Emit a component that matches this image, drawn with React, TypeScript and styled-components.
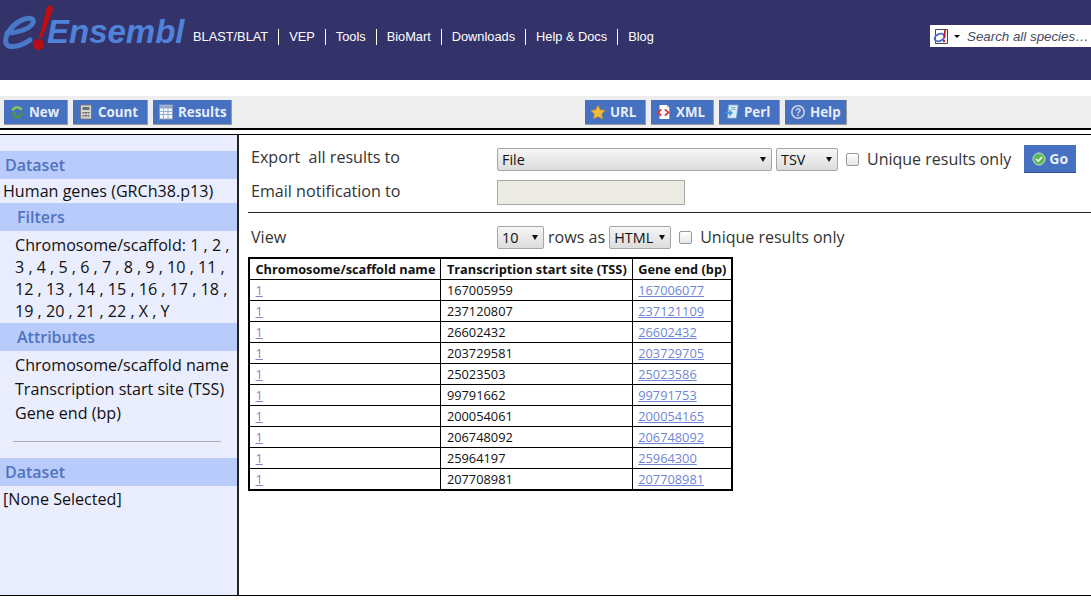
import React from "react";
import styled, { createGlobalStyle } from "styled-components";

const GlobalStyle = createGlobalStyle`
  html, body {
    margin: 0;
    padding: 0;
    background: #fff;
    font-family: "Open Sans", sans-serif;
    color: #111;
  }
`;

const Page = styled.div`
  width: 1091px;
  height: 600px;
  overflow: hidden;
  display: flex;
  flex-direction: column;
`;

const Masthead = styled.header`
  height: 80px;
  background: #33336a;
  display: flex;
  align-items: flex-start;
  flex: none;
`;

const Logo = styled.div`
  width: 193px;
  height: 60px;
  flex: none;
  display: flex;
  align-items: flex-start;
  font-family: "Liberation Sans", sans-serif;
  font-style: italic;
`;

const LogoMark = styled.svg`
  flex: none;
  width: 47px;
  height: 56px;
  overflow: visible;
`;

const LogoWord = styled.span`
  font-size: 33px;
  line-height: 40px;
  font-weight: 700;
  color: #4f82d8;
  margin-top: 12px;
`;

const Nav = styled.nav`
  display: flex;
  align-items: center;
  margin-top: 29px;
  font-family: "Liberation Sans", sans-serif;
  font-size: 12.8px;
  color: #fff;
`;

const NavItem = styled.span`
  line-height: 16px;
  padding: 0 10px;
  border-left: 1px solid #fff;
  &:first-child {
    padding-left: 0;
    border-left: 0;
  }
`;

const SpeciesSearch = styled.div`
  margin: 25px 0 0 auto;
  width: 161px;
  height: 22px;
  background: #fff;
  display: flex;
  align-items: center;
  padding-left: 3px;
  box-sizing: border-box;
  font-family: "Liberation Sans", sans-serif;
  font-style: italic;
  font-size: 13.33px;
  color: #444a66;
  white-space: nowrap;
  overflow: hidden;
`;

const Caret = styled.span`
  width: 0;
  height: 0;
  margin: 0 7px 0 4px;
  border-left: 3px solid transparent;
  border-right: 3px solid transparent;
  border-top: 3px solid #000;
`;

const Toolbar = styled.div`
  margin-top: 16px;
  height: 32px;
  flex: none;
  background: #eee;
  display: flex;
  align-items: flex-start;
  padding: 4px 0 0 4px;
  box-sizing: border-box;
`;

const ToolGroup = styled.div`
  display: flex;
  gap: 5px;
`;

const ToolGroupRight = styled(ToolGroup)`
  margin-left: 353px;
`;

const ToolButton = styled.div<{ $w: number }>`
  width: ${(p) => p.$w}px;
  height: 25px;
  box-sizing: border-box;
  background: #4670c0;
  border-right: 1px solid #9a9a9a;
  border-bottom: 1px solid #9a9a9a;
  display: flex;
  align-items: center;
  gap: 4px;
  padding: 0 0 1px 5px;
  color: #e6edf9;
  font-size: 13.33px;
  font-weight: 700;
  white-space: nowrap;
  svg {
    flex: none;
  }
`;

const DoubleRule = styled.div`
  height: 7px;
  flex: none;
  box-sizing: border-box;
  border-top: 2px solid #000;
  border-bottom: 1px solid #000;
`;

const Main = styled.div`
  flex: none;
  height: 461px;
  display: flex;
  border-bottom: 1px solid #000;
  box-sizing: border-box;
`;

const Sidebar = styled.aside`
  width: 239px;
  flex: none;
  box-sizing: border-box;
  border-right: 2px solid #222;
  background: #e9edfd;
  padding-top: 16px;
  font-size: 16.1px;
`;

const SideHead = styled.div<{ $indent?: boolean }>`
  height: 28px;
  line-height: 28px;
  background: #b9cbfb;
  color: #4f73c0;
  font-weight: 600;
  font-size: 16px;
  padding-left: ${(p) => (p.$indent ? 17 : 5)}px;
`;

const SideText = styled.div<{ $indent?: boolean }>`
  line-height: 24px;
  padding-left: ${(p) => (p.$indent ? 15 : 3)}px;
  white-space: nowrap;
`;

const FilterList = styled.div`
  padding: 3px 0 1px 15px;
  line-height: 22px;
  white-space: nowrap;
`;

const AttributeList = styled.div`
  padding-top: 2px;
`;

const NoneSelected = styled(SideText)`
  padding-top: 1px;
`;

const SideDivider = styled.hr`
  margin: 16px 16px 16px 13px;
  border: 0;
  border-top: 1px solid #aab;
  height: 0;
`;

const Content = styled.main`
  flex: 1;
  min-width: 0;
  display: flex;
  flex-direction: column;
  padding: 11px 0 0 9px;
  color: #333;
`;

const FormRow = styled.div`
  display: flex;
  align-items: center;
  height: 26px;
  font-size: 16.1px;
`;

const EmailRow = styled(FormRow)`
  margin-top: 7px;
`;

const FormLabel = styled.div<{ $lift?: number }>`
  width: 249px;
  padding: 0 0 ${(p) => p.$lift ?? 0}px 3px;
  box-sizing: border-box;
  flex: none;
`;

const Select = styled.div<{ $w: number }>`
  width: ${(p) => p.$w}px;
  height: 23px;
  box-sizing: border-box;
  flex: none;
  border: 1px solid #a6a6a6;
  border-radius: 2px;
  background: linear-gradient(#f6f6f6, #dcdcdc);
  color: #111;
  font-size: 14.4px;
  line-height: 22px;
  padding-left: 4px;
  position: relative;
  &::after {
    content: "";
    position: absolute;
    right: 5px;
    top: 8px;
    border-left: 3.5px solid transparent;
    border-right: 3.5px solid transparent;
    border-top: 5px solid #111;
  }
`;

const FormatSelect = styled(Select)`
  margin-left: 4px;
`;

const Check = styled.span`
  width: 11px;
  height: 11px;
  flex: none;
  margin-left: 8px;
  border: 1px solid #999;
  border-radius: 2px;
  background: linear-gradient(#fff, #e6e6e6);
`;

const UniqueLabel = styled.span`
  font-size: 16px;
  margin-left: 8px;
  white-space: nowrap;
`;

const GoButton = styled.div`
  margin-left: 13px;
  width: 52px;
  height: 28px;
  box-sizing: border-box;
  background: #4670c0;
  border-bottom: 1px solid #2f4f90;
  color: #e6edf9;
  font-size: 14px;
  font-weight: 700;
  display: flex;
  align-items: center;
  justify-content: center;
  gap: 3px;
`;

const DisabledInput = styled.div`
  width: 188px;
  height: 25px;
  box-sizing: border-box;
  border: 1px solid #a9a9a9;
  background: #ebebe4;
`;

const FormRule = styled.hr`
  margin: 7px 0 0 0;
  border: 0;
  border-top: 1px solid #222;
  height: 0;
`;

const ViewRow = styled(FormRow)`
  margin-top: 11px;
`;

const RowsAs = styled.span`
  margin: 0 4px;
`;

const Table = styled.table`
  margin: 7px 0 0 0;
  border-collapse: collapse;
  border: 2px solid #000;
  font-size: 12.8px;
  color: #111;
  th, td {
    border: 1px solid #000;
    padding: 0 5px 0 5.5px;
    height: 20px;
    text-align: left;
    white-space: nowrap;
    line-height: 20px;
  }
  th {
    font-size: 12.75px;
    font-weight: 700;
  }
`;

const VisitedLink = styled.a`
  color: #9a78c4;
  text-decoration: underline;
`;

const CellLink = styled.a`
  color: #6f86d6;
  text-decoration: underline;
`;

function EnsemblMark() {
  return (
    <LogoMark viewBox="0 0 47 56">
      <path
        d="M7 33C17 33 30 29 33 23C35 17 27 17 20 21C11 26 4 36 6 43C8 49 20 47 30 40"
        fill="none"
        stroke="#4a78c8"
        strokeWidth="5"
        strokeLinecap="round"
      />
      <path d="M47 7C50 4 54 6 52.5 11L42 38H39Z" fill="#c00d12" />
      <circle cx="38.5" cy="44.5" r="5.5" fill="#b80d12" />
    </LogoMark>
  );
}

function ReloadIcon() {
  return (
    <svg width="16" height="16" viewBox="0 0 16 16">
      <path d="M3.5 6.5A5 5 0 0 1 12.5 6" fill="none" stroke="#8cc850" strokeWidth="2.4" />
      <path d="M12.8 9A5 5 0 0 1 5 12.2" fill="none" stroke="#4f9a33" strokeWidth="2.4" />
      <path d="M1 9.5h6l-3-4z" fill="#4f9a33" transform="translate(1 3) scale(1 .8)" />
    </svg>
  );
}

function CalcIcon() {
  return (
    <svg width="16" height="16" viewBox="0 0 16 16">
      <rect x="2.5" y="1" width="11" height="14" rx="1" fill="#d8d8d2" stroke="#777" />
      <rect x="4.5" y="3" width="7" height="3" fill="#66707c" />
      <path d="M4.5 8h2v1.5h-2zM7 8h2v1.5H7zM9.5 8h2v1.5h-2zM4.5 11h2v1.5h-2zM7 11h2v1.5H7zM9.5 11h2v1.5h-2z" fill="#666" />
    </svg>
  );
}

function TableIcon() {
  return (
    <svg width="16" height="16" viewBox="0 0 16 16">
      <rect x="1.5" y="1" width="13" height="14" fill="#f4f7fc" stroke="#8b9bb5" />
      <rect x="2" y="1.5" width="12" height="3" fill="#8fa8cc" />
      <path d="M1.5 7.5h13M1.5 10.5h13M5.5 4.5v10M10 4.5v10" stroke="#8fb0d8" fill="none" />
    </svg>
  );
}

function StarIcon() {
  return (
    <svg width="16" height="16" viewBox="0 0 18 17">
      <path d="M9 .8l2.5 5.2 5.7.8-4.1 4 1 5.6L9 13.7l-5.1 2.7 1-5.6-4.1-4 5.7-.8z" fill="#f0bb3c" stroke="#c28d24" strokeWidth=".6" />
    </svg>
  );
}

function XmlIcon() {
  return (
    <svg width="16" height="16" viewBox="0 0 18 18">
      <path d="M4 1h8l3 3v13H4z" fill="#fff" />
      <path d="M12 1l3 3h-3z" fill="#ccc" />
      <path d="M6 6L2 9.5 6 13M10 6l4 3.5-4 3.5" fill="none" stroke="#e03030" strokeWidth="2" />
    </svg>
  );
}

function ScriptIcon() {
  return (
    <svg width="16" height="16" viewBox="0 0 18 18">
      <path d="M5 1h11l-2 15H4z" fill="#dcecf8" stroke="#5f9fd0" />
      <path d="M1 9h5V6l4 4-4 4v-3H1z" fill="#3d97dd" />
      <path d="M8 4h5M8 6h5" stroke="#6aa4d0" />
    </svg>
  );
}

function HelpIcon() {
  return (
    <svg width="16" height="16" viewBox="0 0 16 16">
      <circle cx="8" cy="8" r="6.2" fill="none" stroke="#cdd3e2" strokeWidth="1.6" />
      <text x="8" y="11.5" fontSize="10" fontWeight="700" textAnchor="middle" fill="#cdd3e2" fontFamily="Liberation Sans">?</text>
    </svg>
  );
}

function GoIcon() {
  return (
    <svg width="14" height="14" viewBox="0 0 14 14">
      <circle cx="7" cy="7" r="6" fill="#5cb85c" stroke="#cfe8c8" />
      <path d="M4 7l2.2 2.2L10 5" fill="none" stroke="#fff" strokeWidth="1.6" />
    </svg>
  );
}

function SpeciesIcon() {
  return (
    <svg width="17" height="17" viewBox="0 0 17 17">
      <path d="M2.5 1.5h12v14h-12z" fill="#fff" stroke="#444" />
      <ellipse cx="6.5" cy="9.5" rx="5" ry="3.5" fill="none" stroke="#4a70c8" strokeWidth="2" transform="rotate(-25 6.5 9.5)" />
      <path d="M12 2l-.5 8" stroke="#c01818" strokeWidth="1.6" />
      <circle cx="11" cy="13" r="1.2" fill="#c01818" />
    </svg>
  );
}

const navItems = ["BLAST/BLAT", "VEP", "Tools", "BioMart", "Downloads", "Help & Docs", "Blog"];

const rows = [
  ["167005959", "167006077"],
  ["237120807", "237121109"],
  ["26602432", "26602432"],
  ["203729581", "203729705"],
  ["25023503", "25023586"],
  ["99791662", "99791753"],
  ["200054061", "200054165"],
  ["206748092", "206748092"],
  ["25964197", "25964300"],
  ["207708981", "207708981"],
];

export default function App() {
  return (
    <Page>
      <GlobalStyle />
      <Masthead>
        <Logo>
          <EnsemblMark />
          <LogoWord>Ensembl</LogoWord>
        </Logo>
        <Nav>
          {navItems.map((item) => (
            <NavItem key={item}>{item}</NavItem>
          ))}
        </Nav>
        <SpeciesSearch>
          <SpeciesIcon />
          <Caret />
          Search all species…
        </SpeciesSearch>
      </Masthead>
      <Toolbar>
        <ToolGroup>
          <ToolButton $w={64}><ReloadIcon />New</ToolButton>
          <ToolButton $w={75}><CalcIcon />Count</ToolButton>
          <ToolButton $w={79}><TableIcon />Results</ToolButton>
        </ToolGroup>
        <ToolGroupRight>
          <ToolButton $w={61}><StarIcon />URL</ToolButton>
          <ToolButton $w={63}><XmlIcon />XML</ToolButton>
          <ToolButton $w={61}><ScriptIcon />Perl</ToolButton>
          <ToolButton $w={62}><HelpIcon />Help</ToolButton>
        </ToolGroupRight>
      </Toolbar>
      <DoubleRule />
      <Main>
        <Sidebar>
          <SideHead>Dataset</SideHead>
          <SideText>Human genes (GRCh38.p13)</SideText>
          <SideHead $indent>Filters</SideHead>
          <FilterList>
            Chromosome/scaffold: 1 , 2 ,<br />
            3 , 4 , 5 , 6 , 7 , 8 , 9 , 10 , 11 ,<br />
            12 , 13 , 14 , 15 , 16 , 17 , 18 ,<br />
            19 , 20 , 21 , 22 , X , Y
          </FilterList>
          <SideHead $indent>Attributes</SideHead>
          <AttributeList>
            <SideText $indent>Chromosome/scaffold name</SideText>
            <SideText $indent>Transcription start site (TSS)</SideText>
            <SideText $indent>Gene end (bp)</SideText>
          </AttributeList>
          <SideDivider />
          <SideHead>Dataset</SideHead>
          <NoneSelected>[None Selected]</NoneSelected>
        </Sidebar>
        <Content>
          <FormRow>
            <FormLabel $lift={5}>Export&nbsp; all results to</FormLabel>
            <Select $w={275}>File</Select>
            <FormatSelect $w={62}>TSV</FormatSelect>
            <Check />
            <UniqueLabel>Unique results only</UniqueLabel>
            <GoButton><GoIcon />Go</GoButton>
          </FormRow>
          <EmailRow>
            <FormLabel $lift={3}>Email notification to</FormLabel>
            <DisabledInput />
          </EmailRow>
          <FormRule />
          <ViewRow>
            <FormLabel>View</FormLabel>
            <Select $w={47}>10</Select>
            <RowsAs>rows as</RowsAs>
            <Select $w={62}>HTML</Select>
            <Check />
            <UniqueLabel>Unique results only</UniqueLabel>
          </ViewRow>
          <div>
            <Table>
              <thead>
                <tr>
                  <th>Chromosome/scaffold name</th>
                  <th>Transcription start site (TSS)</th>
                  <th>Gene end (bp)</th>
                </tr>
              </thead>
              <tbody>
                {rows.map(([start, end]) => (
                  <tr key={start}>
                    <td><VisitedLink href="#">1</VisitedLink></td>
                    <td>{start}</td>
                    <td><CellLink href="#">{end}</CellLink></td>
                  </tr>
                ))}
              </tbody>
            </Table>
          </div>
        </Content>
      </Main>
    </Page>
  );
}
